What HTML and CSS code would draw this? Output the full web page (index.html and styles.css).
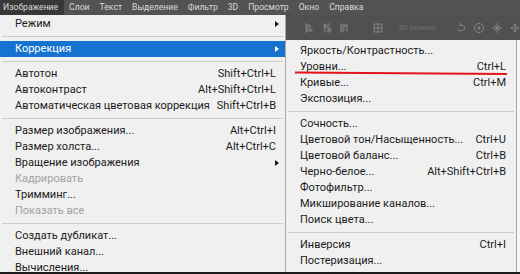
FILE: index.html
```html
<!DOCTYPE html>
<html lang="ru">
<head>
  <meta charset="UTF-8" />
  <title>Изображение - Коррекция</title>
  <link rel="stylesheet" href="styles.css">
</head>
<body>

  <div class="screen">

    <nav class="menubar">
      <span class="active">Изображение</span>
      <span>Слои</span>
      <span>Текст</span>
      <span>Выделение</span>
      <span>Фильтр</span>
      <span>3D</span>
      <span>Просмотр</span>
      <span>Окно</span>
      <span>Справка</span>
    </nav>

    <div class="workspace">

      <ul class="menu main-menu">
        <li><span>Режим</span><i class="arrow"></i></li>
        <li class="sep"></li>
        <li class="selected"><span>Коррекция</span><i class="arrow"></i></li>
        <li class="sep"></li>
        <li><span>Автотон</span><span>Shift+Ctrl+L</span></li>
        <li><span>Автоконтраст</span><span>Alt+Shift+Ctrl+L</span></li>
        <li><span>Автоматическая цветовая коррекция</span><span>Shift+Ctrl+B</span></li>
        <li class="sep"></li>
        <li><span>Размер изображения...</span><span>Alt+Ctrl+I</span></li>
        <li><span>Размер холста...</span><span>Alt+Ctrl+C</span></li>
        <li><span>Вращение изображения</span><i class="arrow"></i></li>
        <li class="disabled"><span>Кадрировать</span></li>
        <li><span>Тримминг...</span></li>
        <li class="disabled"><span>Показать все</span></li>
        <li class="sep"></li>
        <li><span>Создать дубликат...</span></li>
        <li><span>Внешний канал...</span></li>
        <li><span>Вычисления...</span></li>
      </ul>

      <div class="side">
        <div class="optionsbar">
          <svg class="icon" viewBox="0 0 12 12"><path d="M2 1v10M2 3h4v2H2M2 7h6v2H2" fill="none" stroke="currentColor"/></svg>
          <svg class="icon" viewBox="0 0 12 12"><path d="M4 1v10M8 1v10M2 3h4v2H2M6 7h4v2H6" fill="none" stroke="currentColor"/></svg>
          <svg class="icon" viewBox="0 0 12 12"><path d="M3 1v10M3 3h5v2H3M3 7h3v2H3M9 2v8" fill="none" stroke="currentColor"/></svg>
          <svg class="icon wide-gap" viewBox="0 0 12 12"><path d="M2 2h8v8H2zM2 6h8M6 2v8" fill="none" stroke="currentColor"/></svg>
          <span class="mode">3D-режим:</span>
          <svg class="icon" viewBox="0 0 12 12"><path d="M2 7a4 3 0 1 0 3-4M5 1l1 2-2 1" fill="none" stroke="currentColor"/></svg>
          <svg class="icon" viewBox="0 0 12 12"><circle cx="6" cy="6" r="4.5" fill="none" stroke="currentColor"/><circle cx="6" cy="6" r="1.5" fill="currentColor"/></svg>
          <svg class="icon" viewBox="0 0 12 12"><path d="M6 1v10M1 6h10M3 3l6 6M9 3l-6 6" fill="none" stroke="currentColor"/></svg>
          <svg class="icon" viewBox="0 0 12 12"><path d="M6 2v8M2 6h8M4.5 3.5 6 2l1.5 1.5M4.5 8.5 6 10l1.5-1.5M3.5 4.5 2 6l1.5 1.5M8.5 4.5 10 6 8.5 7.5" fill="none" stroke="currentColor"/></svg>
          <svg class="icon" viewBox="0 0 12 12"><path d="M1 3h7v6H1zM8 5l3-2v6l-3-2" fill="currentColor"/></svg>
        </div>

        <ul class="menu submenu">
          <li><span>Яркость/Контрастность...</span></li>
          <li><span>Уровни...</span><span>Ctrl+L</span></li>
          <li><span>Кривые...</span><span>Ctrl+M</span></li>
          <li><span>Экспозиция...</span></li>
          <li class="sep"></li>
          <li><span>Сочность...</span></li>
          <li><span>Цветовой тон/Насыщенность...</span><span>Ctrl+U</span></li>
          <li><span>Цветовой баланс...</span><span>Ctrl+B</span></li>
          <li><span>Черно-белое...</span><span>Alt+Shift+Ctrl+B</span></li>
          <li><span>Фотофильтр...</span></li>
          <li><span>Микширование каналов...</span></li>
          <li><span>Поиск цвета...</span></li>
          <li class="sep"></li>
          <li><span>Инверсия</span><span>Ctrl+I</span></li>
          <li><span>Постеризация...</span></li>
        </ul>
      </div>

    </div>

    <!-- red underline drawn over the "Уровни" item -->
    <svg class="mark" viewBox="0 0 520 274">
      <path d="M295 72.5 L507 74" stroke="#e3141c" stroke-width="2" fill="none"/>
    </svg>

  </div>

</body>
</html>
```

FILE: styles.css
```css
* {
  box-sizing: border-box;
}

body {
  margin: 0;
  background-color: #f0f0f0;
  font-family: Roboto, "Noto Sans", sans-serif;
}

.screen {
  position: relative;
  width: 520px;
  height: 274px;
  overflow: hidden;
  display: flex;
  flex-direction: column;
  border-bottom: 2px solid #1c1c1c;
}

.menubar {
  height: 15px;
  flex: none;
  display: flex;
  align-items: center;
  background-color: #535353;
  color: #dadada;
  font-size: 8.6px;
  line-height: 15px;
  white-space: nowrap;
}

.menubar span {
  padding: 0 5px;
}

.menubar .active {
  background-color: #383838;
  padding: 0 6px 0 3px;
}

.workspace {
  flex: 1;
  display: flex;
  min-height: 0;
}

.menu {
  list-style: none;
  margin: 0;
  font-size: 11px;
  color: #1b1b1b;
  background-color: #f0f0f0;
}

.menu li {
  display: flex;
  justify-content: space-between;
  align-items: center;
  height: 16px;
  line-height: 16px;
  white-space: nowrap;
}

.menu li.sep {
  height: 1px;
  margin: 4px 2px;
  background-color: #cdcdcd;
}

.menu li.disabled {
  color: #a2a2a2;
}

.menu li.selected {
  background-color: #1672cf;
  color: #ffffff;
}

.arrow {
  width: 0;
  height: 0;
  margin-right: -3px;
  border-left: 4px solid #1b1b1b;
  border-top: 3.5px solid transparent;
  border-bottom: 3.5px solid transparent;
}

.selected .arrow {
  border-left-color: #ffffff;
}

.main-menu {
  width: 286px;
  flex: none;
  padding: 1px 9px 0 15px;
  border-right: 1px solid #a9a9a9;
}

.main-menu li.selected {
  margin-left: -15px;
  margin-right: -9px;
  padding-left: 15px;
  padding-right: 9px;
}

.main-menu li.sep {
  margin-left: -13px;
  margin-right: -7px;
}

.side {
  flex: 1;
  display: flex;
  flex-direction: column;
  background-color: #f6f6f6;
}

.optionsbar {
  height: 25px;
  flex: none;
  display: flex;
  align-items: center;
  padding-left: 18px;
  gap: 5px;
  background-color: #505050;
  color: #858585;
  white-space: nowrap;
}

.icon {
  width: 12px;
  height: 12px;
  flex: none;
}

.optionsbar .wide-gap {
  margin-left: 17px;
}

.mode {
  margin: 0 13px 0 9px;
  font-size: 8px;
  color: #6e6e6e;
}

.mode ~ .icon {
  margin-right: 1px;
}

.submenu {
  width: 231px;
  flex: 1;
  padding: 3px 10px 0 14px;
  border-right: 1px solid #a9a9a9;
}

.submenu li.sep {
  margin: 4px -8px 4px -12px;
}

.mark {
  position: absolute;
  top: 0;
  left: 0;
  width: 520px;
  height: 274px;
  pointer-events: none;
}
```
